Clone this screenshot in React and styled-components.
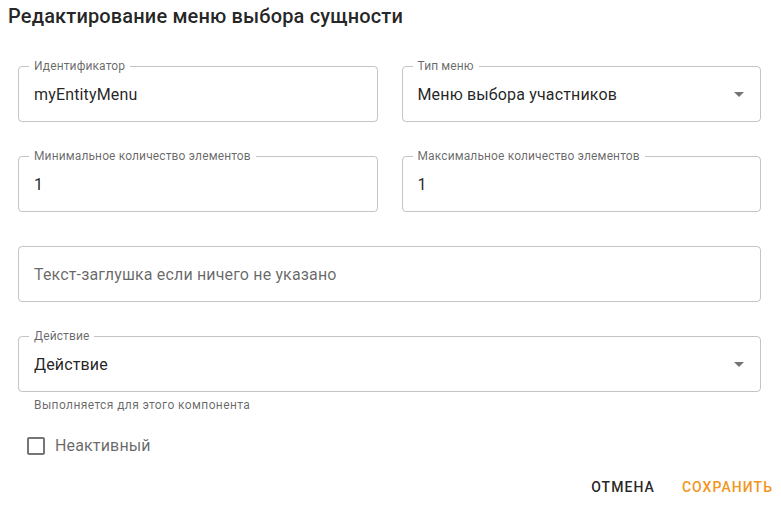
import React from "react";
import styled, { createGlobalStyle } from "styled-components";

const Global = createGlobalStyle`
  html, body { margin: 0; padding: 0; background: #fff; }
  body { font-family: Roboto, "Noto Sans", "Liberation Sans", sans-serif; color: rgba(0,0,0,0.87); }
  * { box-sizing: border-box; }
`;

const Dialog = styled.div`
  width: 781px;
  height: 505px;
  display: flex;
  flex-direction: column;
  background: #fff;
  overflow: hidden;
`;

const Title = styled.h2`
  margin: 0;
  padding: 0 8px;
  font-size: 20px;
  font-weight: 500;
  line-height: 32px;
  letter-spacing: 0.0075em;
  color: rgba(0,0,0,0.87);
`;

const Content = styled.div`
  padding: 34px 20px 0 18px;
  display: grid;
  grid-template-columns: 1fr 1fr;
  column-gap: 24px;
  row-gap: 34px;
`;

const Field = styled.div`
  position: relative;
  grid-column: ${(p) => (p.$full ? "1 / -1" : "auto")};
  height: 56px;
  border: 1px solid rgba(0,0,0,0.23);
  border-radius: 4px;
  display: flex;
  align-items: center;
  padding: 0 15px;
`;

const Label = styled.span`
  position: absolute;
  top: -8px;
  left: 10px;
  padding: 0 5px;
  background: #fff;
  font-size: 12px;
  line-height: 14px;
  letter-spacing: 0.01em;
  color: rgba(0,0,0,0.6);
  white-space: nowrap;
`;

const Value = styled.span`
  flex: 1;
  font-size: 16px;
  line-height: 23px;
  letter-spacing: 0.00938em;
  color: ${(p) => (p.$placeholder ? "rgba(0,0,0,0.6)" : "rgba(0,0,0,0.87)")};
  white-space: nowrap;
`;

const Arrow = styled.svg`
  width: 24px;
  height: 24px;
  margin-right: -6px;
  fill: rgba(0,0,0,0.54);
  flex: none;
`;

const Below = styled.div`
  grid-column: 1 / -1;
  margin-top: -31px;
  display: flex;
  flex-direction: column;
`;

const Helper = styled.p`
  margin: 0;
  padding-left: 16px;
  font-size: 12px;
  line-height: 20px;
  letter-spacing: 0.03333em;
  color: rgba(0,0,0,0.6);
`;

const CheckRow = styled.label`
  display: flex;
  align-items: center;
  margin-top: 10px;
  margin-left: -3px;
  height: 42px;
`;

const CheckBtn = styled.span`
  width: 42px;
  height: 42px;
  margin-right: -2px;
  display: flex;
  align-items: center;
  justify-content: center;
  svg { width: 24px; height: 24px; fill: rgba(0,0,0,0.54); }
`;

const CheckText = styled.span`
  font-size: 16px;
  line-height: 24px;
  letter-spacing: 0.00938em;
  color: rgba(0,0,0,0.6);
`;

const Actions = styled.div`
  margin-top: auto;
  display: flex;
  justify-content: flex-end;
  gap: 11px;
`;

const Button = styled.button`
  border: 0;
  background: transparent;
  padding: 6px 8px;
  height: 36px;
  font-family: inherit;
  font-size: 14px;
  font-weight: 500;
  letter-spacing: 0.075em;
  text-transform: uppercase;
  color: ${(p) => (p.$primary ? "#f2961d" : "rgba(0,0,0,0.87)")};
  cursor: pointer;
`;

const DropIcon = () => (
  <Arrow viewBox="0 0 24 24">
    <path d="M7 10l5 5 5-5z" />
  </Arrow>
);

export default function App() {
  return (
    <>
      <Global />
      <Dialog>
        <Title>Редактирование меню выбора сущности</Title>
        <Content>
          <Field>
            <Label>Идентификатор</Label>
            <Value>myEntityMenu</Value>
          </Field>
          <Field>
            <Label>Тип меню</Label>
            <Value>Меню выбора участников</Value>
            <DropIcon />
          </Field>
          <Field>
            <Label>Минимальное количество элементов</Label>
            <Value>1</Value>
          </Field>
          <Field>
            <Label>Максимальное количество элементов</Label>
            <Value>1</Value>
          </Field>
          <Field $full>
            <Value $placeholder>Текст-заглушка если ничего не указано</Value>
          </Field>
          <Field $full>
            <Label>Действие</Label>
            <Value>Действие</Value>
            <DropIcon />
          </Field>
          <Below>
            <Helper>Выполняется для этого компонента</Helper>
            <CheckRow>
              <CheckBtn>
                <svg viewBox="0 0 24 24">
                  <path d="M19 5v14H5V5h14m0-2H5c-1.1 0-2 .9-2 2v14c0 1.1.9 2 2 2h14c1.1 0 2-.9 2-2V5c0-1.1-.9-2-2-2z" />
                </svg>
              </CheckBtn>
              <CheckText>Неактивный</CheckText>
            </CheckRow>
          </Below>
        </Content>
        <Actions>
          <Button>Отмена</Button>
          <Button $primary>Сохранить</Button>
        </Actions>
      </Dialog>
    </>
  );
}
